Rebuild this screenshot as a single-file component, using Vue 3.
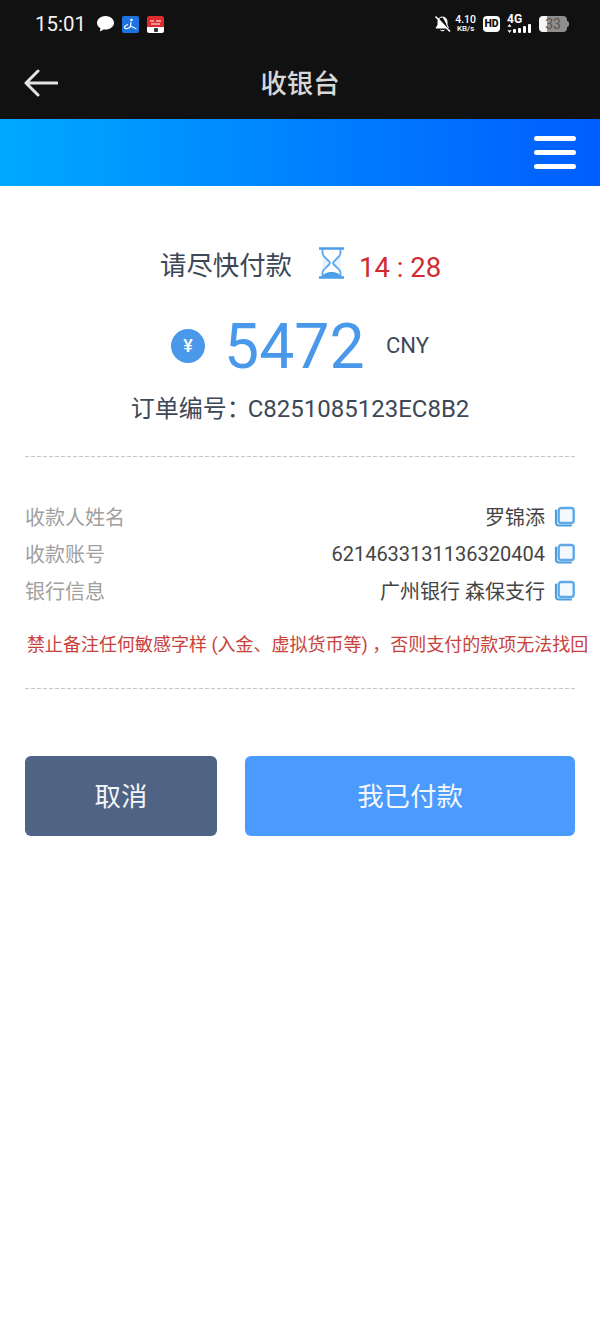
<script setup>
const rows = [
  { label: '收款人姓名', value: '罗锦添' },
  { label: '收款账号', value: '6214633131136320404' },
  { label: '银行信息', value: '广州银行 森保支行' },
]
</script>

<template>
  <div class="page">
    <header class="top">
      <div class="status">
        <div class="status-left">
          <span class="time">15:01</span>
          <svg class="bubble" width="19" height="18" viewBox="0 0 19 18">
            <path d="M9.5 1C4.8 1 1 4 1 7.8c0 2.3 1.3 4.2 3.400 5.500L4 16.500l3.700-2.100c.6.1 1.200.2 1.800.2 4.700 0 8.500-3 8.500-6.800S14.200 1 9.500 1z" fill="#fff"/>
          </svg>
          <svg class="app" width="17" height="17" viewBox="0 0 17 17">
            <rect width="17" height="17" rx="2" fill="#1d74e0"/>
            <circle cx="9.500" cy="4" r="1.300" fill="#fff"/>
            <path d="M9 6l-.5 4 6 3M6 8.500c-2 .6-3.500 1.600-3.500 2.800 0 1 1.500 1.600 3 1.200 1.500-.4 3-1.500 3.500-2.500" fill="none" stroke="#fff" stroke-width="1.200"/>
          </svg>
          <svg class="app" width="17" height="17" viewBox="0 0 17 17">
            <rect width="17" height="17" rx="2.500" fill="#e02a2e"/>
            <path d="M0 11h17v3.500a2.500 2.500 0 0 1-2.500 2.500h-12A2.500 2.500 0 0 1 0 14.500z" fill="#fff"/>
            <rect x="7" y="12" width="4" height="4" rx="1" fill="#333"/>
            <path d="M3 5h4M9 5h5M4 8h9" stroke="#fff" stroke-width="1" fill="none"/>
          </svg>
        </div>
        <div class="status-right">
          <svg width="17" height="18" viewBox="0 0 17 18">
            <path d="M8.500 2C5.700 2 4 4 4 6.500V10l-2 3h10.500L4 3.500M8.500 2c2.800 0 4.500 2 4.500 4.500V10l1.500 3M6.500 15c.5 1 3.500 1 4 0" fill="#fff" stroke="#fff" stroke-width="1"/>
            <path d="M1.500 1.500l14.500 15" stroke="#fff" stroke-width="1.600"/>
          </svg>
          <div class="speed"><span class="speed-num">4.10</span><span class="speed-unit">KB/s</span></div>
          <span class="hd">HD</span>
          <div class="net">
            <span class="net-label">4G</span>
            <svg width="25" height="9" viewBox="0 0 25 9">
              <path d="M2.500 0l2 2.800h-4zM2.500 9l-2-2.800h4z" fill="#fff"/>
              <rect x="6" y="5" width="3" height="4" rx="1" fill="#fff"/>
              <rect x="11" y="4" width="3" height="5" rx="1" fill="#fff"/>
              <rect x="16" y="2" width="3" height="7" rx="1" fill="#fff"/>
              <rect x="21" y="0" width="3" height="9" rx="1" fill="#fff"/>
            </svg>
          </div>
          <div class="battery"><span class="battery-num">33</span></div>
        </div>
      </div>
      <div class="nav">
        <svg class="back" width="34" height="28" viewBox="0 0 34 28">
          <path d="M14 2L2 14l12 12M2 14h31" fill="none" stroke="#e4e4e4" stroke-width="3" stroke-linecap="round" stroke-linejoin="round"/>
        </svg>
        <h1 class="title">收银台</h1>
        <span></span>
      </div>
    </header>

    <div class="band">
      <div class="menu"><i></i><i></i><i></i></div>
    </div>

    <main class="content">
      <div class="wait">
        <span class="wait-text">请尽快付款</span>
        <svg class="glass" width="27" height="32" viewBox="0 0 27 32">
          <path d="M1 1.500h25M1 30.500h25" stroke="#4b9ee8" stroke-width="2.500" fill="none"/>
          <path d="M4.500 2v4c0 4.500 7 7 7.500 10-.5 3-7.500 5.500-7.500 10v4M22.500 2v4c0 4.500-7 7-7.500 10 .5 3 7.500 5.500 7.500 10v4" fill="#e8f3fc" stroke="#5aa8ea" stroke-width="1.800"/>
          <path d="M4.500 30c0-3.500 5-5 9-5s9 1.500 9 5z" fill="#4b9ee8"/>
        </svg>
        <span class="count">14 : 28</span>
      </div>

      <div class="amount">
        <span class="coin">¥</span>
        <span class="sum">5472</span>
        <span class="cny">CNY</span>
      </div>

      <p class="order"><span class="order-key">订单编号：</span>C8251085123EC8B2</p>
      <div class="dash"></div>

      <section class="info">
        <div v-for="row in rows" :key="row.label" class="row">
          <span class="label">{{ row.label }}</span>
          <span class="value">{{ row.value }}</span>
          <svg class="copy" width="21" height="21" viewBox="0 0 21 21">
            <path d="M2 4.500v12a3 3 0 0 0 3 3h12" fill="none" stroke="#4b9ee0" stroke-width="2.200" stroke-linecap="round"/>
            <rect x="4.700" y="2" width="15" height="15" rx="2.500" fill="#f3f9fd" stroke="#5fa9e6" stroke-width="2.400"/>
          </svg>
        </div>
      </section>

      <p class="warn">禁止备注任何敏感字样 (入金、虚拟货币等) ，否则支付的款项无法找回</p>
      <div class="dash"></div>

      <div class="actions">
        <button class="btn cancel">取消</button>
        <button class="btn pay">我已付款</button>
      </div>
    </main>
  </div>
</template>

<style scoped>
.page {
  width: 600px;
  height: 1333px;
  background: #fff;
  font-family: Roboto, "Noto Sans CJK SC", sans-serif;
  overflow: hidden;
}
.top { background: #111112; height: 119px; color: #fff; }
.status {
  height: 48px;
  padding: 0 33px 0 35px;
  display: flex;
  align-items: center;
  justify-content: space-between;
}
.status-left { display: flex; align-items: center; }
.time { font-size: 20.500px; color: #f2f2f2; width: 61px; }
.bubble { margin-right: 7px; }
.app { margin-right: 8px; }
.status-right { display: flex; align-items: center; }
.speed { display: flex; flex-direction: column; align-items: center; margin: 0 7px 0 4px; line-height: 9px; }
.speed-num { font-size: 10.500px; font-weight: 500; }
.speed-unit { font-size: 8px; font-weight: 500; }
.hd {
  width: 17px; height: 16px; border-radius: 4px; background: #fff; color: #111;
  font-size: 10.500px; font-weight: 900; line-height: 16px; text-align: center;
  margin-right: 7px;
}
.net { display: flex; flex-direction: column; align-items: flex-start; margin-right: 6px; width: 26px; }
.net-label { font-size: 12px; font-weight: 700; line-height: 9px; }
.battery {
  position: relative;
  width: 28px; height: 16px; border-radius: 4px;
  background: linear-gradient(90deg, #f4f4f4 0 28%, #8e8e8e 28% 100%);
  text-align: center;
}
.battery::after {
  content: "";
  position: absolute;
  right: -2px; top: 5px;
  width: 2px; height: 6px;
  border-radius: 0 2px 2px 0;
  background: #8e8e8e;
}
.battery-num { display: block; font-size: 14px; line-height: 16px; color: #555; }
.nav {
  height: 71px;
  padding: 0 24px;
  display: grid;
  grid-template-columns: 1fr auto 1fr;
  align-items: center;
}
.back { margin-top: -2px; }
.title { margin: 2px 0 0; font-size: 26.400px; font-weight: 500; color: #d8d8d8; line-height: 1.2; }
.band {
  height: 67px;
  background: linear-gradient(90deg, #00a9ff 0%, #0082ff 50%, #005dff 100%);
  display: flex;
  align-items: center;
  justify-content: flex-end;
  padding-right: 24px;
}
.menu { display: flex; flex-direction: column; gap: 9px; }
.menu i { display: block; width: 42px; height: 5px; border-radius: 3px; background: #fff; }
.content { padding: 0 25px; }
.wait {
  margin-top: 55px;
  height: 44px;
  display: flex;
  align-items: center;
  padding-left: 135px;
}
.wait-text { font-size: 26.400px; color: #3d4857; width: 133px; }
.glass { margin-left: 25px; margin-right: 14px; margin-top: -1px; }
.count { font-size: 27.500px; color: #cf2a2f; margin-top: 8px; }
.amount {
  margin-top: 28px;
  height: 66px;
  display: flex;
  align-items: center;
  padding-left: 146px;
}
.coin {
  width: 34px; height: 34px; border-radius: 50%; background: #4a98ea; color: #fff;
  font-size: 18px; font-weight: 500; line-height: 34px; text-align: center; margin-right: 20px;
}
.sum { font-size: 62.500px; color: #4a98ea; margin-left: -1px; margin-right: 22px; width: 140px; white-space: nowrap; }
.cny { font-size: 22px; color: #3d4857; margin-top: -2px; }
.order {
  margin: 13px 0 0;
  height: 34px;
  line-height: 34px;
  text-align: center;
  font-size: 24px;
  color: #3d4857;
  padding-bottom: 30px;
}
.order-key { margin-right: -3px; }
.dash {
  height: 1px;
  background: repeating-linear-gradient(90deg, #c6c6c6 0 4px, transparent 4px 6px);
}
.info { padding-top: 41px; }
.row { height: 37px; display: flex; align-items: center; font-size: 20px; }
.label { color: #a0a0a0; }
.value { margin-left: auto; color: #444; }
.copy { margin-left: 9px; }
.warn {
  margin: 0 -13px 0 2px;
  padding-top: 23px;
  height: 56px;
  line-height: 26px;
  font-size: 18px;
  color: #c8423c;
  white-space: nowrap;
}
.actions {
  margin-top: 67px;
  display: flex;
  gap: 28px;
}
.btn {
  height: 80px;
  border: 0;
  border-radius: 6px;
  font-family: inherit;
  font-size: 26.400px;
  color: #f4f6fa;
  padding: 0 0 4px;
}
.cancel { width: 192px; background: #4f6484; }
.pay { width: 330px; background: #4b9bff; }
</style>
